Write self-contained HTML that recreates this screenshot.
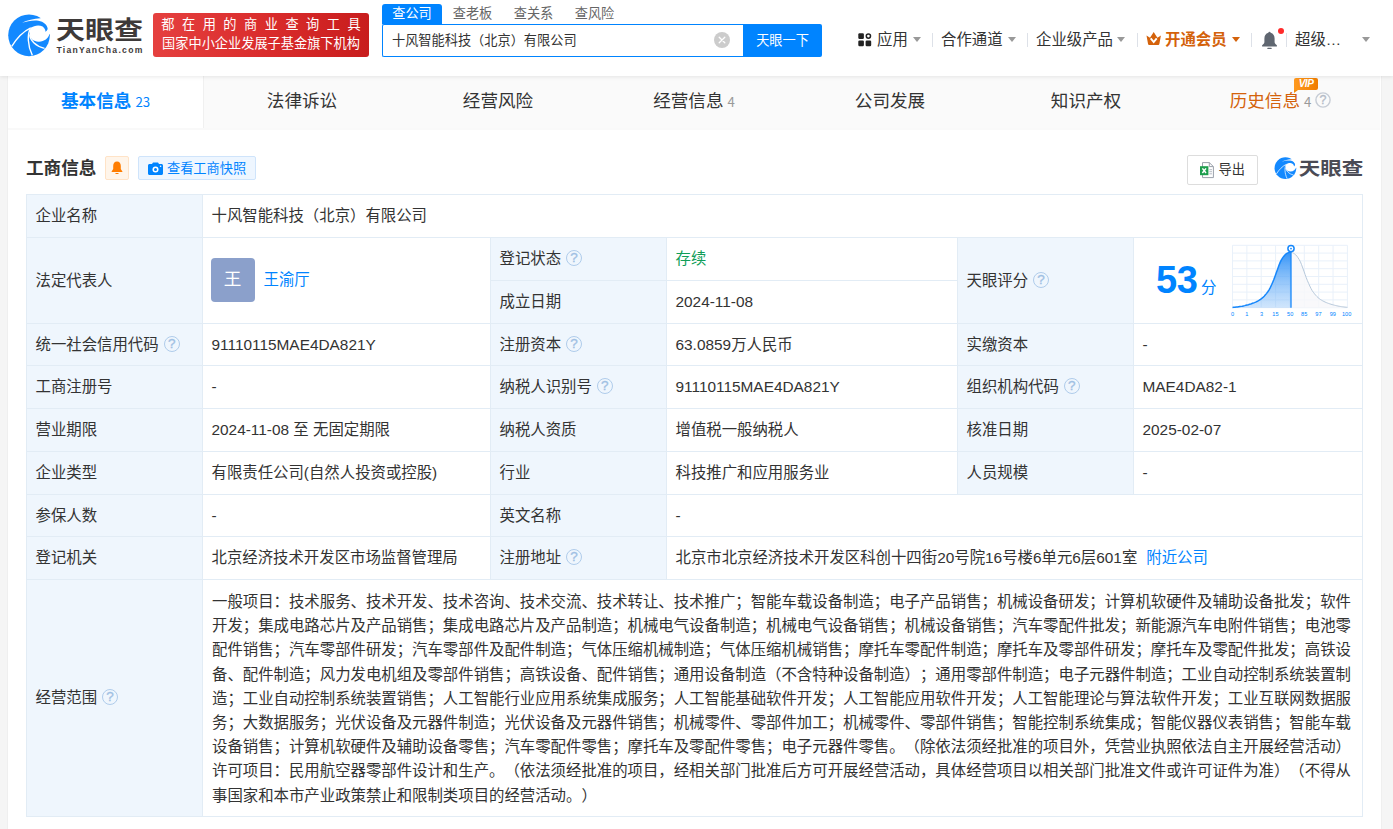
<!DOCTYPE html>
<html lang="zh-CN">
<head>
<meta charset="utf-8">
<title>十风智能科技（北京）有限公司 - 天眼查</title>
<style>
*{box-sizing:border-box;margin:0;padding:0}
html,body{width:1393px;height:829px;overflow:hidden}
body{background:#f5f5f5;font-family:"Liberation Sans","Noto Sans CJK SC",sans-serif;font-size:15.4px;color:#333;position:relative;text-spacing-trim:space-all;-webkit-font-smoothing:auto}
a{color:#0084ff;text-decoration:none}
.abs{position:absolute}
/* ---------- header ---------- */
#hd{position:absolute;left:0;top:0;width:1393px;height:76px;background:#fff;box-shadow:0 1px 4px rgba(0,0,0,.09);z-index:5}
#logo{position:absolute;left:8px;top:13px;width:136px;height:46px}
#slogan{position:absolute;left:153px;top:13px;width:216px;height:44px;border-radius:3px;background:linear-gradient(90deg,#e5403f 0%,#d92b2b 55%,#c81d1d 100%);color:#fff;font-size:13.2px;line-height:18px;padding-top:3px;text-align:center;white-space:nowrap;overflow:hidden}
#slogan .l1{letter-spacing:7.5px;padding-left:7.5px;display:block;height:19px}
#slogan .l2{display:block;height:18px;letter-spacing:0}
#stabs{position:absolute;left:382px;top:4px;height:20px;font-size:13.2px;line-height:19px;color:#666;white-space:nowrap}
#stabs span{display:inline-block;height:20px;padding:0 10px;margin-right:0;vertical-align:top;width:61px;text-align:center}
#stabs span.on{background:#0084ff;color:#fff;border-radius:3px 3px 0 0;width:60px}
#sbox{position:absolute;left:382px;top:24px;width:362px;height:33px;border:1px solid #0084ff;border-right:0;border-radius:2px 0 0 2px;background:#fff;font-size:13.2px;line-height:31px;padding-left:9px;color:#333;white-space:nowrap}
#sclr{position:absolute;left:714px;top:31.5px;width:16px;height:16px}
#sbtn{position:absolute;left:743px;top:24px;width:79px;height:33px;background:#0084ff;color:#fff;font-size:13.2px;line-height:33px;text-align:center;border-radius:0 2px 2px 0}
.nv{position:absolute;top:30px;height:20px;line-height:20px;font-size:15.4px;color:#333;white-space:nowrap}
.sep{position:absolute;top:33px;width:1px;height:14px;background:#dde1e8}
.car{position:absolute;top:36.5px;width:0;height:0;border-left:4px solid transparent;border-right:4px solid transparent;border-top:5px solid #999}
/* ---------- main ---------- */
#main{position:absolute;left:8px;top:76px;width:1373px;height:760px;background:#fff;box-shadow:-1px 0 0 #efefef,1px 0 0 #efefef}
#tabs{position:absolute;left:0;top:0;width:1372px;height:54px;background:#fafafa;border-bottom:2px solid #f9f9f9}
.tab{position:absolute;top:0;height:52px;line-height:50px;font-size:17.6px;color:#333;text-align:center;white-space:nowrap}
.tab.on{background:#fff;border-right:1px solid #f0f0f0;color:#0084ff;font-weight:bold}
.tab .n{font-size:13.2px;font-weight:normal;color:#999;margin-left:4px;font-family:"Noto Sans CJK SC","Liberation Sans",sans-serif}
.tab.on .n{color:#0084ff}
.vip{position:absolute;left:110px;top:2px;width:24px;height:12px;border-radius:2px 2px 2px 0;background:linear-gradient(90deg,#ff9a1f,#f07c00);color:#fff;font:italic bold 10px/12px "Liberation Sans",sans-serif;text-align:center;letter-spacing:-.5px}
.vip:after{content:"";position:absolute;left:0;bottom:-3px;border-top:3px solid #f28a0a;border-right:4px solid transparent}

/* ---------- section head ---------- */
#sh-t{position:absolute;left:18px;top:79px;font-size:17.6px;line-height:26px;font-weight:bold;color:#333;white-space:nowrap}
#sh-bell{position:absolute;left:97px;top:80px;width:24px;height:24px;border:1px solid #ffe3c7;background:#fff5ea;border-radius:2px}
#sh-snap{position:absolute;left:130px;top:80px;width:118px;height:24px;border:1px solid #cfe4fb;background:#eef6ff;border-radius:2px;color:#0084ff;font-size:13.2px;line-height:23.5px;padding-left:28px;white-space:nowrap}
#sh-exp{position:absolute;left:1179px;top:79px;width:71px;height:30px;border:1px solid #ddd;border-radius:2px;background:#fff;font-size:13.2px;line-height:28px;padding-left:30.5px;color:#333;white-space:nowrap}
/* ---------- table ---------- */
#tb{position:absolute;left:18px;top:118px;width:1337px;height:623px;background:#fff;border:1px solid #e2ecf5;font-size:15.4px;line-height:20px;color:#333}
.c{position:absolute;border-right:1px solid #e2ecf5;border-bottom:1px solid #e2ecf5;padding-left:8.5px;display:flex;align-items:center;white-space:nowrap;background:#fff}
.c.l{background:#eff6fd}
.q{display:inline-block;width:16px;height:16px;margin-left:5px;border:1.3px solid #afcceb;border-radius:50%;color:#9fc0e3;font:13.5px/14.6px "Liberation Sans",sans-serif;-webkit-text-stroke:.3px #9fc0e3;text-align:center;vertical-align:middle;position:relative;top:-1px}
.av{display:inline-block;width:44px;height:44px;border-radius:4px;background:#8ba0cb;color:#fff;font-size:17.6px;line-height:43px;text-align:center;margin:0 9px 0 -1px;position:relative;top:-1px}
.av+a{position:relative;top:-.5px}
.sc{position:absolute;left:22px;top:19px;font:bold 38px/46px "Liberation Sans",sans-serif;color:#0084ff;letter-spacing:-.3px}
.fen{position:absolute;left:67px;top:40px;font-size:15.4px;line-height:20px;color:#0084ff}
#scope{display:block;white-space:nowrap;line-height:24.2px;padding:10px 0 0 9px}
</style>
</head>
<body>
<!-- ================= HEADER ================= -->
<div id="hd">
  <svg id="logo" viewBox="0 0 136 46">
    <g transform="translate(-4 -3) scale(.06031)">
      <circle cx="415" cy="420" r="345" fill="#1389ff"/>
      <path d="M298 212C380 172 500 140 602 137L700 100L800 330L770 385L688 362C705 350 720 335 724 310C718 248 660 192 570 178C480 166 380 188 298 212Z" fill="#fff"/>
      <path d="M440 296C500 255 585 240 640 275C672 298 688 330 688 362L790 340L790 402L755 397C735 470 670 520 580 526C535 528 500 515 470 495C440 465 424 420 427 370C429 340 433 315 440 296Z" fill="#fff"/>
      <path d="M443 296C330 350 210 470 128 603" fill="none" stroke="#fff" stroke-width="23"/>
      <path d="M430 318C392 400 384 580 470 752" fill="none" stroke="#fff" stroke-width="23"/>
      <path d="M426 405C432 500 520 600 672 636" fill="none" stroke="#fff" stroke-width="23"/>
    </g>
    <text x="48" y="27.4" font-family="'Liberation Sans','Noto Sans CJK SC',sans-serif" font-weight="bold" font-size="28" fill="#3e3a39" textLength="87" lengthAdjust="spacingAndGlyphs" transform="translate(0 1.9) scale(1 .875)">天眼查</text>
    <text x="48.4" y="39.6" font-family="'Liberation Sans',sans-serif" font-weight="bold" font-size="8.6" fill="#3e3a39" textLength="86" lengthAdjust="spacing">TianYanCha.com</text>
  </svg>
  <div id="slogan"><span class="l1">都在用的商业查询工具</span><span class="l2">国家中小企业发展子基金旗下机构</span></div>
  <div id="stabs"><span class="on">查公司</span><span>查老板</span><span>查关系</span><span>查风险</span></div>
  <div id="sbox">十风智能科技（北京）有限公司</div>
  <svg id="sclr" viewBox="0 0 16 16"><circle cx="8" cy="8" r="8" fill="#ccc"/><path d="M5.2 5.2l5.6 5.6M10.8 5.2l-5.6 5.6" stroke="#fff" stroke-width="1.3" stroke-linecap="round"/></svg>
  <div id="sbtn">天眼一下</div>

  <!-- nav -->
  <svg class="abs" style="left:858px;top:33px;width:14px;height:14px" viewBox="0 0 14 14"><rect x="0.3" y="0.3" width="5.6" height="5.6" rx="1.2" fill="#222"/><rect x="0.3" y="7.6" width="5.6" height="5.6" rx="1.2" fill="#222"/><rect x="7.6" y="7.6" width="5.6" height="5.6" rx="1.2" fill="#222"/><circle cx="10.4" cy="3.1" r="2.1" fill="none" stroke="#222" stroke-width="1.5"/></svg>
  <div class="nv" style="left:877px">应用</div><i class="car" style="left:913px"></i>
  <i class="sep" style="left:932px"></i>
  <div class="nv" style="left:941px">合作通道</div><i class="car" style="left:1008px"></i>
  <i class="sep" style="left:1027px"></i>
  <div class="nv" style="left:1036px">企业级产品</div><i class="car" style="left:1117px"></i>
  <i class="sep" style="left:1137px"></i>
  <svg class="abs" style="left:1146px;top:32px;width:16px;height:14px" viewBox="0 0 16 14"><path d="M.5 3.400L4 5.700L7.700 0L11.400 5.700L14.900 3.400L13.400 11.700C13.300 12.600 12.700 13.100 11.900 13.100H3.500C2.700 13.100 2.100 12.600 2 11.700Z" fill="#d4620b"/><path d="M4.700 6.300L7.700 10L10.700 6.300" fill="none" stroke="#fff" stroke-width="1.900"/></svg>
  <div class="nv" style="left:1165px;color:#d4620b;font-weight:bold">开通会员</div><i class="car" style="left:1232px;border-top-color:#d4620b"></i>
  <i class="sep" style="left:1251px"></i>
  <svg class="abs" style="left:1261px;top:31px;width:17px;height:19px" viewBox="0 0 17 19"><path d="M7.400 1.800A1.100 1.100 0 0 1 9.600 1.800C12.400 2.500 13.600 4.900 13.600 7.600V11C13.600 12.300 14.600 13.200 15.900 14.300V15.400H1.100V14.300C2.400 13.200 3.400 12.300 3.400 11V7.600C3.400 4.900 4.600 2.500 7.400 1.800Z" fill="#5f6670"/><rect x="6.300" y="16.700" width="4.400" height="1.300" rx=".6" fill="#5f6670"/></svg>
  <i class="abs" style="left:1278px;top:27.500px;width:6px;height:6px;border-radius:50%;background:#ff2a2a"></i>
  <i class="sep" style="left:1286px"></i>
  <div class="nv" style="left:1295px">超级…</div><i class="car" style="left:1362px"></i>
</div>
<!-- ================= MAIN ================= -->
<div id="main">
  <div id="tabs">
    <div class="tab on" style="left:0;width:196px">基本信息<span class="n">23</span></div>
    <div class="tab" style="left:196px;width:196px">法律诉讼</div>
    <div class="tab" style="left:392px;width:196px">经营风险</div>
    <div class="tab" style="left:588px;width:196px">经营信息<span class="n">4</span></div>
    <div class="tab" style="left:784px;width:196px">公司发展</div>
    <div class="tab" style="left:980px;width:196px">知识产权</div>
    <div class="tab" style="left:1176px;width:196px;color:#d4620b;border-right:0;padding-right:3px">历史信息<span class="n">4</span><svg style="vertical-align:-2px;margin-left:4px;position:relative;top:-1px" width="16" height="16" viewBox="0 0 16 16"><circle cx="8" cy="8" r="7.100" fill="none" stroke="#c6ccd5" stroke-width="1.400"/><text x="8" y="12.300" font-size="12.500" text-anchor="middle" fill="#b4bbc6" stroke="#b4bbc6" stroke-width=".3" font-family="'Liberation Sans',sans-serif">?</text></svg>
      <span class="vip">VIP</span></div>
  </div>

  <div id="sh-t">工商信息</div>
  <div id="sh-bell"><svg style="position:absolute;left:5px;top:4px" width="12" height="14" viewBox="0 0 12 14"><path d="M6 .6C3.5.6 2.2 2.6 2.2 5v3L.6 10.4V11h10.800V10.400L9.800 8V5C9.800 2.600 8.500.6 6 .6Z" fill="#ff7d00"/><rect x="4.400" y="12" width="3.200" height="1" rx=".5" fill="#ff7d00"/></svg></div>
  <div id="sh-snap"><svg style="position:absolute;left:9px;top:5px" width="15" height="13" viewBox="0 0 15 13"><path d="M1.500 2H4L5 .4h5L11 2h2.500C14.300 2 15 2.700 15 3.500v8c0 .800-.7 1.500-1.500 1.500h-12C.7 13 0 12.300 0 11.500v-8C0 2.700.7 2 1.500 2Z" fill="#0084ff"/><circle cx="7.500" cy="7.400" r="3" fill="#fff"/><circle cx="7.500" cy="7.400" r="1.500" fill="#0084ff"/><circle cx="12.600" cy="4.300" r=".8" fill="#fff"/></svg>查看工商快照</div>
  <div id="sh-exp"><svg style="position:absolute;left:11px;top:6px" width="16" height="17" viewBox="0 0 16 17"><path d="M3.500.6h6.800L14.400 4.600V15.600H3.500Z" fill="#fff" stroke="#9aa0aa" stroke-width="1"/><path d="M10.300.6V4.600H14.400" fill="none" stroke="#9aa0aa" stroke-width="1"/><path d="M10.400 7.700h2.600M10.400 9.700h2.600M10.400 11.800h2.600" stroke="#b5bac2" stroke-width="1"/><rect x="1" y="4.200" width="8.400" height="9" fill="#1e9e4d"/><path d="M3.400 6.400L7 11M7 6.400L3.400 11" stroke="#fff" stroke-width="1.500"/></svg>导出</div>
  <svg class="abs" style="left:1266px;top:80px" width="90" height="26" viewBox="0 0 90 26">
    <g transform="translate(-1.65 -1.01) scale(.03145)">
      <circle cx="415" cy="420" r="345" fill="#1389ff"/>
      <path d="M298 212C380 172 500 140 602 137L700 100L800 330L770 385L688 362C705 350 720 335 724 310C718 248 660 192 570 178C480 166 380 188 298 212Z" fill="#fff"/>
      <path d="M440 296C500 255 585 240 640 275C672 298 688 330 688 362L790 340L790 402L755 397C735 470 670 520 580 526C535 528 500 515 470 495C440 465 424 420 427 370C429 340 433 315 440 296Z" fill="#fff"/>
      <path d="M443 296C330 350 210 470 128 603" fill="none" stroke="#fff" stroke-width="23"/>
      <path d="M430 318C392 400 384 580 470 752" fill="none" stroke="#fff" stroke-width="23"/>
      <path d="M426 405C432 500 520 600 672 636" fill="none" stroke="#fff" stroke-width="23"/>
    </g>
    <text x="24.700" y="21" font-family="'Liberation Sans','Noto Sans CJK SC',sans-serif" font-weight="bold" font-size="21" fill="#4a4b55" textLength="64.6" lengthAdjust="spacingAndGlyphs" transform="translate(0 .5) scale(1 .87)">天眼查</text>
  </svg>
  <div id="tb">
    <div class="c l" style="left:0px;top:0px;width:176px;height:43px">企业名称</div>
    <div class="c" style="left:176px;top:0px;width:1160px;height:43px">十风智能科技（北京）有限公司</div>
    <div class="c l" style="left:0px;top:43px;width:176px;height:86px">法定代表人</div>
    <div class="c" style="left:176px;top:43px;width:288px;height:86px"><span class="av">王</span><a>王渝厅</a></div>
    <div class="c l" style="left:464px;top:43px;width:176px;height:43px">登记状态<span class="q">?</span></div>
    <div class="c" style="left:640px;top:43px;width:291px;height:43px"><span style="color:#0f9d58">存续</span></div>
    <div class="c l" style="left:464px;top:86px;width:176px;height:43px">成立日期</div>
    <div class="c" style="left:640px;top:86px;width:291px;height:43px">2024-11-08</div>
    <div class="c l" style="left:931px;top:43px;width:176px;height:86px">天眼评分<span class="q">?</span></div>
    <div class="c" style="left:1107px;top:43px;width:229px;height:86px"><span class="sc">53</span><span class="fen">分</span><svg class="abs" style="left:92px;top:2px" width="135" height="82" viewBox="0 0 135 82">
      <defs><linearGradient id="gA" x1="0" y1="0" x2="0" y2="1"><stop offset="0" stop-color="#2b8ff7" stop-opacity=".95"/><stop offset="1" stop-color="#8ec2f8" stop-opacity=".42"/></linearGradient></defs>
      <path d="M6.50 5.30V67.70M20.86 5.30V67.70M35.23 5.30V67.70M49.59 5.30V67.70M63.95 5.30V67.70M78.31 5.30V67.70M92.68 5.30V67.70M107.04 5.30V67.70M121.40 5.30V67.70M6.50 5.30H121.40M6.50 13.10H121.40M6.50 20.90H121.40M6.50 28.70H121.40M6.50 36.50H121.40M6.50 44.30H121.40M6.50 52.10H121.40M6.50 59.90H121.40M6.50 67.70H121.40" fill="none" stroke="#e9f1fa" stroke-width="1"/>
      <path d="M65.00 12.26 L66.17 12.60 L67.35 13.16 L68.53 13.83 L69.70 14.78 L70.88 16.11 L72.05 17.76 L73.23 19.64 L74.40 21.78 L75.58 24.69 L76.75 27.97 L77.93 31.16 L79.10 34.50 L80.28 37.78 L81.45 40.70 L82.63 43.43 L83.80 46.04 L84.98 48.44 L86.15 50.54 L87.33 52.27 L88.50 53.79 L89.68 55.19 L90.85 56.46 L92.03 57.60 L93.20 58.59 L94.38 59.45 L95.55 60.19 L96.73 60.86 L97.90 61.48 L99.08 62.04 L100.25 62.55 L101.43 63.02 L102.60 63.45 L103.78 63.85 L104.95 64.23 L106.13 64.58 L107.30 64.92 L108.48 65.23 L109.65 65.53 L110.83 65.80 L112.00 66.05 L113.18 66.27 L114.35 66.47 L115.53 66.65 L116.70 66.82 L117.88 66.97 L119.05 67.11 L120.23 67.23 L121.40 67.35 L121.40 67.70 L65.00 67.70Z" fill="#f7f8fa" fill-opacity=".8"/>
      <path d="M65.00 12.26 L66.17 12.60 L67.35 13.16 L68.53 13.83 L69.70 14.78 L70.88 16.11 L72.05 17.76 L73.23 19.64 L74.40 21.78 L75.58 24.69 L76.75 27.97 L77.93 31.16 L79.10 34.50 L80.28 37.78 L81.45 40.70 L82.63 43.43 L83.80 46.04 L84.98 48.44 L86.15 50.54 L87.33 52.27 L88.50 53.79 L89.68 55.19 L90.85 56.46 L92.03 57.60 L93.20 58.59 L94.38 59.45 L95.55 60.19 L96.73 60.86 L97.90 61.48 L99.08 62.04 L100.25 62.55 L101.43 63.02 L102.60 63.45 L103.78 63.85 L104.95 64.23 L106.13 64.58 L107.30 64.92 L108.48 65.23 L109.65 65.53 L110.83 65.80 L112.00 66.05 L113.18 66.27 L114.35 66.47 L115.53 66.65 L116.70 66.82 L117.88 66.97 L119.05 67.11 L120.23 67.23 L121.40 67.35" fill="none" stroke="#b7c9db" stroke-width="1"/>
      <path d="M6.50 67.43 L7.72 67.32 L8.94 67.20 L10.16 67.06 L11.38 66.91 L12.59 66.75 L13.81 66.57 L15.03 66.38 L16.25 66.16 L17.47 65.91 L18.69 65.64 L19.91 65.34 L21.12 65.02 L22.34 64.68 L23.56 64.31 L24.78 63.93 L26.00 63.52 L27.22 63.08 L28.44 62.60 L29.66 62.07 L30.88 61.49 L32.09 60.85 L33.31 60.15 L34.53 59.38 L35.75 58.47 L36.97 57.42 L38.19 56.21 L39.41 54.87 L40.62 53.38 L41.84 51.77 L43.06 49.84 L44.28 47.54 L45.50 44.95 L46.72 42.18 L47.94 39.30 L49.16 36.05 L50.38 32.57 L51.59 29.21 L52.81 25.83 L54.03 22.62 L55.25 20.20 L56.47 18.19 L57.69 16.42 L58.91 14.97 L60.12 13.93 L61.34 13.22 L62.56 12.62 L63.78 12.26 L65.00 12.26 L65.00 67.70 L6.50 67.70Z" fill="url(#gA)"/>
      <path d="M6.50 67.43 L7.72 67.32 L8.94 67.20 L10.16 67.06 L11.38 66.91 L12.59 66.75 L13.81 66.57 L15.03 66.38 L16.25 66.16 L17.47 65.91 L18.69 65.64 L19.91 65.34 L21.12 65.02 L22.34 64.68 L23.56 64.31 L24.78 63.93 L26.00 63.52 L27.22 63.08 L28.44 62.60 L29.66 62.07 L30.88 61.49 L32.09 60.85 L33.31 60.15 L34.53 59.38 L35.75 58.47 L36.97 57.42 L38.19 56.21 L39.41 54.87 L40.62 53.38 L41.84 51.77 L43.06 49.84 L44.28 47.54 L45.50 44.95 L46.72 42.18 L47.94 39.30 L49.16 36.05 L50.38 32.57 L51.59 29.21 L52.81 25.83 L54.03 22.62 L55.25 20.20 L56.47 18.19 L57.69 16.42 L58.91 14.97 L60.12 13.93 L61.34 13.22 L62.56 12.62 L63.78 12.26 L65.00 12.26" fill="none" stroke="#1687fb" stroke-width="1.5"/>
      <path d="M65.00 11.20V67.70" stroke="#1687fb" stroke-width="1.3"/>
      <circle cx="65.00" cy="8.60" r="3.1" fill="#fff" stroke="#1687fb" stroke-width="1.5"/>
      <circle cx="65.00" cy="8.60" r="0.9" fill="#1687fb"/>
      <g font-family="'Liberation Sans',sans-serif" font-size="5.6" fill="#0084ff" text-anchor="middle"><text x="6.5" y="75.6">0</text><text x="20.8" y="75.6">1</text><text x="35.5" y="75.6">3</text><text x="49.4" y="75.6">15</text><text x="64.2" y="75.6">50</text><text x="78.2" y="75.6">85</text><text x="92.4" y="75.6">97</text><text x="106.8" y="75.6">99</text><text x="120.6" y="75.6">100</text></g>
    </svg></div>
    <div class="c l" style="left:0px;top:129px;width:176px;height:42px">统一社会信用代码<span class="q">?</span></div>
    <div class="c" style="left:176px;top:129px;width:288px;height:42px">91110115MAE4DA821Y</div>
    <div class="c l" style="left:464px;top:129px;width:176px;height:42px">注册资本<span class="q">?</span></div>
    <div class="c" style="left:640px;top:129px;width:291px;height:42px">63.0859万人民币</div>
    <div class="c l" style="left:931px;top:129px;width:176px;height:42px">实缴资本</div>
    <div class="c" style="left:1107px;top:129px;width:229px;height:42px">-</div>
    <div class="c l" style="left:0px;top:171px;width:176px;height:43px">工商注册号</div>
    <div class="c" style="left:176px;top:171px;width:288px;height:43px">-</div>
    <div class="c l" style="left:464px;top:171px;width:176px;height:43px">纳税人识别号<span class="q">?</span></div>
    <div class="c" style="left:640px;top:171px;width:291px;height:43px">91110115MAE4DA821Y</div>
    <div class="c l" style="left:931px;top:171px;width:176px;height:43px">组织机构代码<span class="q">?</span></div>
    <div class="c" style="left:1107px;top:171px;width:229px;height:43px">MAE4DA82-1</div>
    <div class="c l" style="left:0px;top:214px;width:176px;height:43px">营业期限</div>
    <div class="c" style="left:176px;top:214px;width:288px;height:43px">2024-11-08 至 无固定期限</div>
    <div class="c l" style="left:464px;top:214px;width:176px;height:43px">纳税人资质</div>
    <div class="c" style="left:640px;top:214px;width:291px;height:43px">增值税一般纳税人</div>
    <div class="c l" style="left:931px;top:214px;width:176px;height:43px">核准日期</div>
    <div class="c" style="left:1107px;top:214px;width:229px;height:43px">2025-02-07</div>
    <div class="c l" style="left:0px;top:257px;width:176px;height:43px">企业类型</div>
    <div class="c" style="left:176px;top:257px;width:288px;height:43px">有限责任公司(自然人投资或控股)</div>
    <div class="c l" style="left:464px;top:257px;width:176px;height:43px">行业</div>
    <div class="c" style="left:640px;top:257px;width:291px;height:43px">科技推广和应用服务业</div>
    <div class="c l" style="left:931px;top:257px;width:176px;height:43px">人员规模</div>
    <div class="c" style="left:1107px;top:257px;width:229px;height:43px">-</div>
    <div class="c l" style="left:0px;top:300px;width:176px;height:42px">参保人数</div>
    <div class="c" style="left:176px;top:300px;width:288px;height:42px">-</div>
    <div class="c l" style="left:464px;top:300px;width:176px;height:42px">英文名称</div>
    <div class="c" style="left:640px;top:300px;width:696px;height:42px">-</div>
    <div class="c l" style="left:0px;top:342px;width:176px;height:43px">登记机关</div>
    <div class="c" style="left:176px;top:342px;width:288px;height:43px">北京经济技术开发区市场监督管理局</div>
    <div class="c l" style="left:464px;top:342px;width:176px;height:43px">注册地址<span class="q">?</span></div>
    <div class="c" style="left:640px;top:342px;width:696px;height:43px">北京市北京经济技术开发区科创十四街20号院16号楼6单元6层601室<a style="margin-left:9px">附近公司</a></div>
    <div class="c l" style="left:0px;top:385px;width:176px;height:237px">经营范围<span class="q">?</span></div>
    <div class="c" style="left:176px;top:385px;width:1160px;height:237px;display:block;padding:0"><div id="scope">一般项目：技术服务、技术开发、技术咨询、技术交流、技术转让、技术推广；智能车载设备制造；电子产品销售；机械设备研发；计算机软硬件及辅助设备批发；软件<br>开发；集成电路芯片及产品销售；集成电路芯片及产品制造；机械电气设备制造；机械电气设备销售；机械设备销售；汽车零配件批发；新能源汽车电附件销售；电池零<br>配件销售；汽车零部件研发；汽车零部件及配件制造；气体压缩机械制造；气体压缩机械销售；摩托车零配件制造；摩托车及零部件研发；摩托车及零配件批发；高铁设<br>备、配件制造；风力发电机组及零部件销售；高铁设备、配件销售；通用设备制造（不含特种设备制造）；通用零部件制造；电子元器件制造；工业自动控制系统装置制<br>造；工业自动控制系统装置销售；人工智能行业应用系统集成服务；人工智能基础软件开发；人工智能应用软件开发；人工智能理论与算法软件开发；工业互联网数据服<br>务；大数据服务；光伏设备及元器件制造；光伏设备及元器件销售；机械零件、零部件加工；机械零件、零部件销售；智能控制系统集成；智能仪器仪表销售；智能车载<br>设备销售；计算机软硬件及辅助设备零售；汽车零配件零售；摩托车及零配件零售；电子元器件零售。（除依法须经批准的项目外，凭营业执照依法自主开展经营活动）<br>许可项目：民用航空器零部件设计和生产。（依法须经批准的项目，经相关部门批准后方可开展经营活动，具体经营项目以相关部门批准文件或许可证件为准）（不得从<br>事国家和本市产业政策禁止和限制类项目的经营活动。）</div></div>
  </div>
</div>
</body>
</html>
